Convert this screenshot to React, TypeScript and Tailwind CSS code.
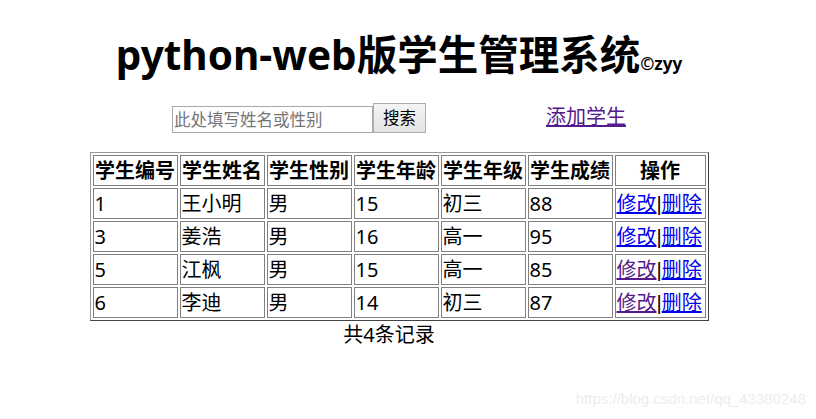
const students = [
  { id: "1", name: "王小明", sex: "男", age: "15", grade: "初三", score: "88", visited: false },
  { id: "3", name: "姜浩", sex: "男", age: "16", grade: "高一", score: "95", visited: false },
  { id: "5", name: "江枫", sex: "男", age: "15", grade: "高一", score: "85", visited: true },
  { id: "6", name: "李迪", sex: "男", age: "14", grade: "初三", score: "87", visited: true },
];

const headers = ["学生编号", "学生姓名", "学生性别", "学生年龄", "学生年级", "学生成绩"];

const font = "font-['Noto_Sans','Noto_Sans_CJK_SC',sans-serif]";

export default function App() {
  return (
    <div className={`relative w-[816px] h-[419px] bg-white text-black overflow-hidden ${font}`}>
      <div className="w-[798px] flex flex-col items-center">
        {/* title */}
        <h1 className="mt-[32px] h-[45px] leading-[45px] text-[40.5px] font-bold whitespace-nowrap">
          python-web版学生管理系统
          <span className="text-[17px] font-bold">©zyy</span>
        </h1>

        {/* search + add */}
        <div className="mt-[26px] flex items-end h-[30px]">
          <input
            type="text"
            placeholder="此处填写姓名或性别"
            className="w-[201px] h-[27px] border border-[#a9a9a9] px-[1px] text-[16.5px] leading-[25px] placeholder:text-[#757575] outline-none"
          />
          <button className="h-[30px] w-[53px] border border-[#adadad] bg-gradient-to-b from-[#f4f4f4] to-[#e3e3e3] text-[16.5px] leading-[28px] text-black">
            搜索
          </button>
          <a href="#" className="ml-[120px] mb-[3px] text-[20px] leading-[27px] text-[#551a8b] underline">
            添加学生
          </a>
        </div>

        {/* table */}
        <table className="mt-[19px] border-separate border-spacing-[2px] border border-t-[#999] border-l-[#999] border-r-[#444] border-b-[#444] text-[20px] leading-[27px]">
          <thead>
            <tr>
              {headers.map((h) => (
                <th key={h} className="w-[85px] p-[1px] border border-[#808080] font-bold text-center whitespace-nowrap">
                  {h}
                </th>
              ))}
              <th className="w-[91px] p-[1px] border border-[#808080] font-bold text-center">操作</th>
            </tr>
          </thead>
          <tbody>
            {students.map((s) => (
              <tr key={s.id}>
                {[s.id, s.name, s.sex, s.age, s.grade, s.score].map((v, i) => (
                  <td key={i} className="p-[1px] border border-[#808080] text-left whitespace-nowrap">
                    {v}
                  </td>
                ))}
                <td className="p-[1px] border border-[#808080] text-left whitespace-nowrap">
                  <a href="#" className={`underline ${s.visited ? "text-[#551a8b]" : "text-[#0000ee]"}`}>
                    修改
                  </a>
                  <span className="font-['Liberation_Sans',sans-serif] leading-none">|</span>
                  <a href="#" className="underline text-[#0000ee]">
                    删除
                  </a>
                </td>
              </tr>
            ))}
          </tbody>
        </table>

        <div className="pr-[20px] text-[20px] leading-[27px]">共4条记录</div>
      </div>

      {/* watermark */}
      <div className="absolute right-[10px] top-[390px] font-['Liberation_Sans',Arial,sans-serif] text-[15px] leading-[18px] text-[#ededed]">
        https://blog.csdn.net/qq_43380248
      </div>
    </div>
  );
}
